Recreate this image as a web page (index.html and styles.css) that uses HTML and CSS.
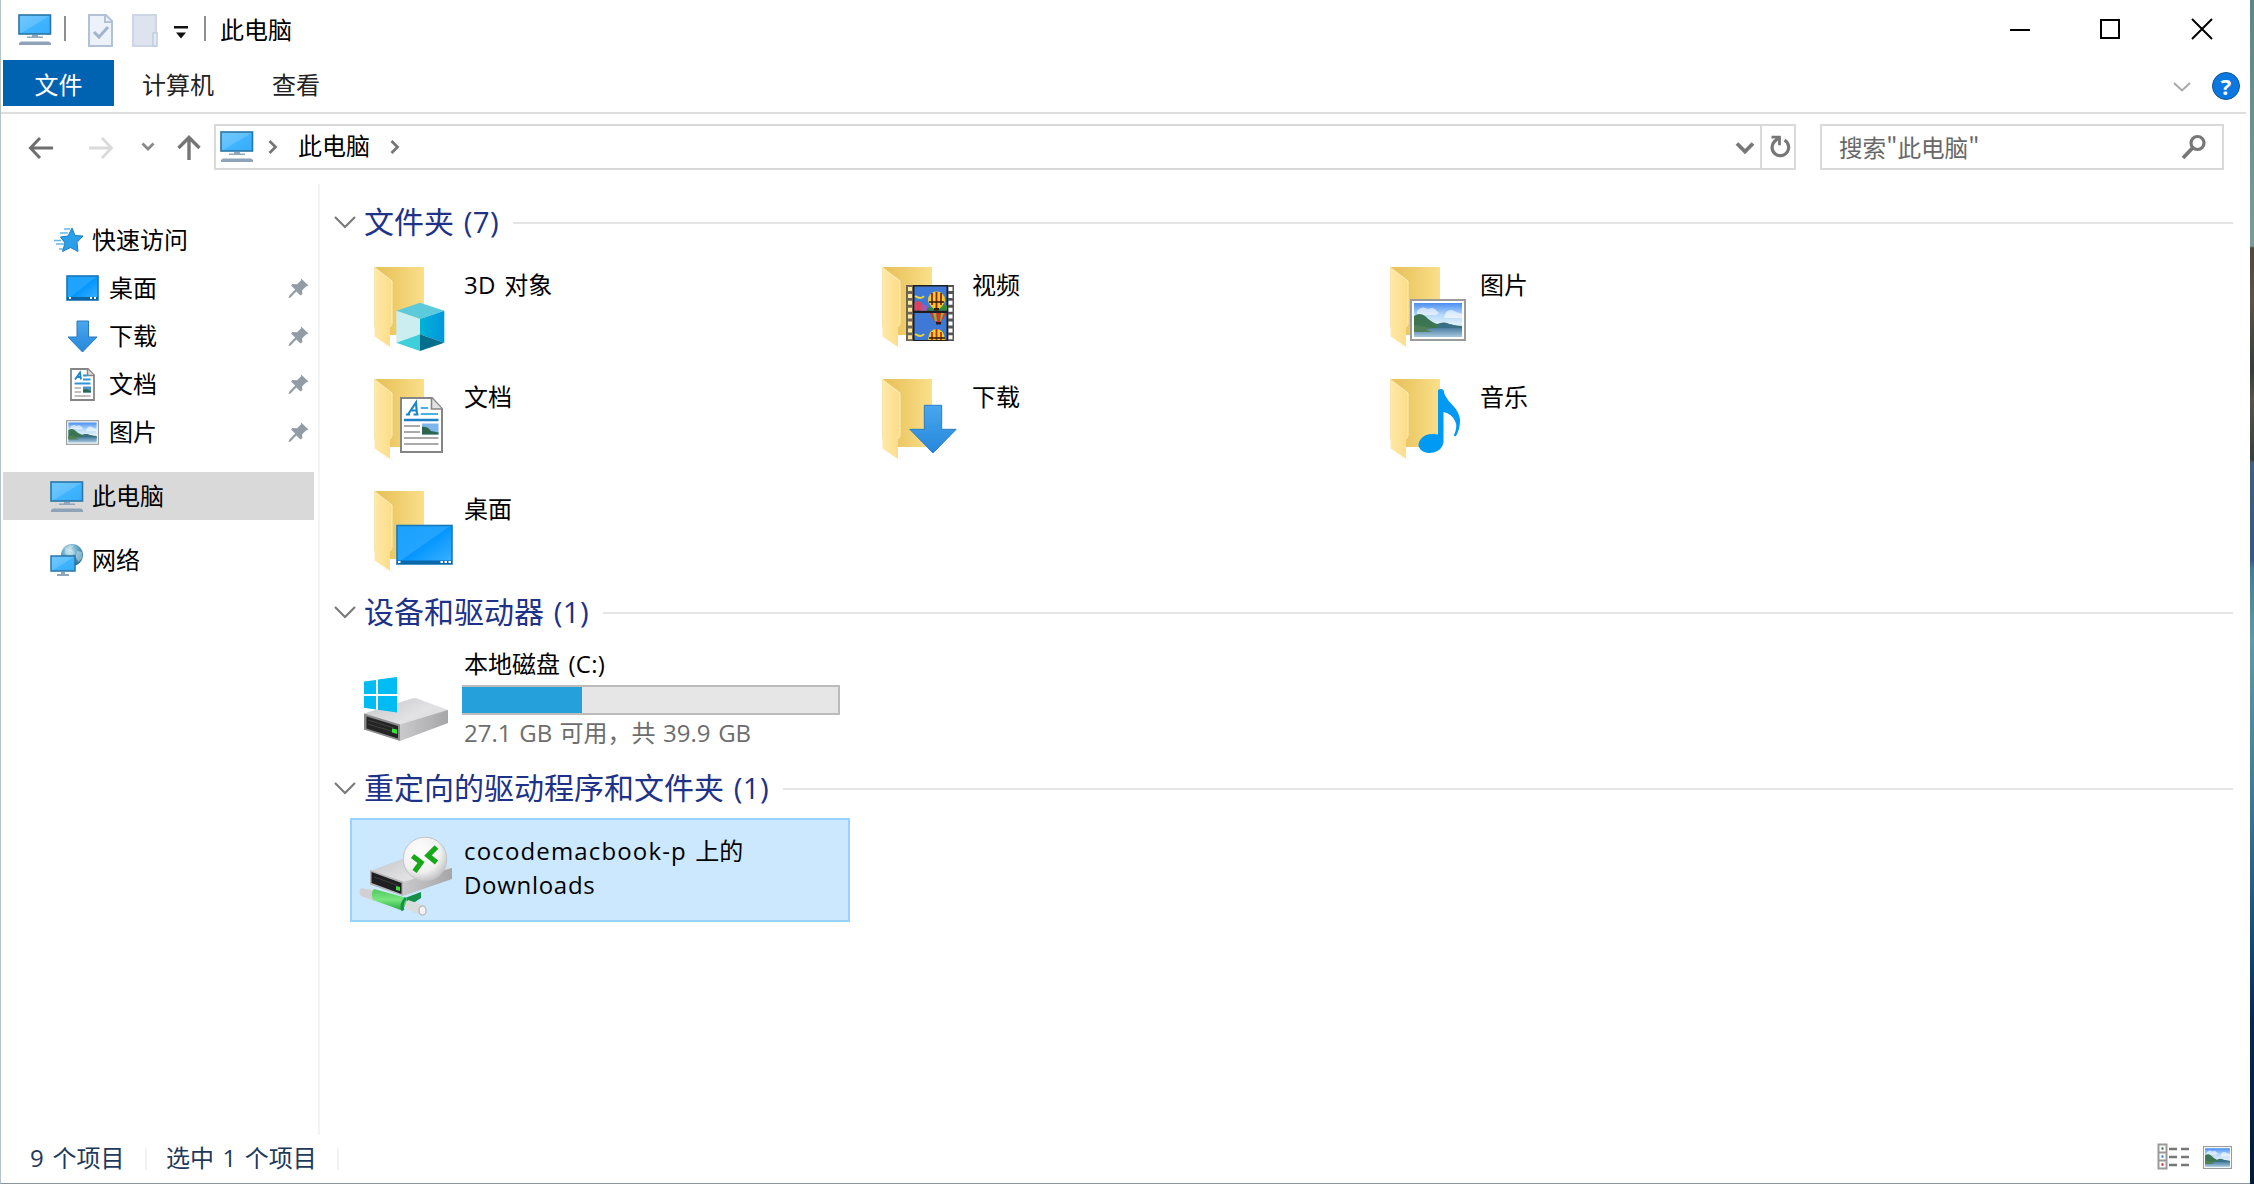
FILE: index.html
```
<!DOCTYPE html>
<html lang="zh-CN">
<head>
<meta charset="utf-8">
<title>此电脑</title>
<link rel="stylesheet" href="styles.css">
</head>
<body>
<svg class="defs" aria-hidden="true">
  <defs>
    <linearGradient id="g-screen" x1="0" y1="0" x2="1" y2="1"><stop offset="0" stop-color="#6fc8ff"/><stop offset=".5" stop-color="#5ec0ff"/><stop offset=".52" stop-color="#40b4ff"/><stop offset="1" stop-color="#36adfb"/></linearGradient>
    <linearGradient id="g-desk" x1="0" y1="0" x2="1" y2="1"><stop offset="0" stop-color="#1aa2ff"/><stop offset=".48" stop-color="#22a4ff"/><stop offset=".5" stop-color="#0496ff"/><stop offset="1" stop-color="#3eb2ff"/></linearGradient>
    <linearGradient id="g-back" x1="0" y1="0" x2="1" y2="0"><stop offset="0" stop-color="#e6c05c"/><stop offset=".4" stop-color="#edcb69"/><stop offset="1" stop-color="#fbdf8a"/></linearGradient>
    <linearGradient id="g-front" x1="0" y1="0" x2="1" y2="0"><stop offset="0" stop-color="#ffe9a8"/><stop offset="1" stop-color="#fcdc88"/></linearGradient>
    <linearGradient id="g-sky" x1="0" y1="0" x2="0" y2="1"><stop offset="0" stop-color="#4b8ff0"/><stop offset=".35" stop-color="#b5d9fb"/><stop offset=".6" stop-color="#dceefb"/></linearGradient>
    <linearGradient id="g-lake" x1="0" y1="0" x2="0" y2="1"><stop offset="0" stop-color="#4c7ea3"/><stop offset="1" stop-color="#a6c8de"/></linearGradient>
    <linearGradient id="g-arrow" x1="0" y1="0" x2="0" y2="1"><stop offset="0" stop-color="#4aa6ee"/><stop offset="1" stop-color="#2588dc"/></linearGradient>
    <linearGradient id="g-top" x1="0" y1="0" x2="1" y2="1"><stop offset="0" stop-color="#c4c5c8"/><stop offset=".5" stop-color="#e2e2e5"/><stop offset="1" stop-color="#cfcfd2"/></linearGradient>
    <linearGradient id="g-side" x1="0" y1="0" x2="1" y2="0"><stop offset="0" stop-color="#cacacd"/><stop offset="1" stop-color="#a6a6a9"/></linearGradient>
    <linearGradient id="g-cubeR" x1="0" y1="0" x2="1" y2="0"><stop offset="0" stop-color="#00b3d4"/><stop offset="1" stop-color="#0096e0"/></linearGradient>
    <linearGradient id="g-pipe" x1="0" y1="0" x2="0" y2="1"><stop offset="0" stop-color="#4fc85c"/><stop offset=".5" stop-color="#79e680"/><stop offset="1" stop-color="#25a838"/></linearGradient>
    <radialGradient id="g-ball" cx=".4" cy=".35" r=".65"><stop offset="0" stop-color="#ffffff"/><stop offset=".7" stop-color="#f0f0f0"/><stop offset="1" stop-color="#c8c8ca"/></radialGradient>
    <radialGradient id="g-globe" cx=".4" cy=".3" r=".7"><stop offset="0" stop-color="#c5e6f2"/><stop offset=".5" stop-color="#6aa9c4"/><stop offset="1" stop-color="#2f6f91"/></radialGradient>

    <symbol id="pc" viewBox="0 0 34 32">
      <rect x="1" y="1" width="31.500" height="19" fill="url(#g-screen)" stroke="#2a76a6" stroke-width="1.600"/>
      <path d="M14 21h6v1.500h5v1.500H9v-1.500h5z" fill="#8fa6bb"/>
      <path d="M3 27.500h28l2 1.500v2H1v-2z" fill="#8fa3b8"/>
    </symbol>
    <symbol id="photo" viewBox="0 0 56 42">
      <rect x="1" y="1" width="54" height="40" fill="#fff" stroke="#9b9b9b" stroke-width="2"/>
      <rect x="4" y="4" width="48" height="34" fill="url(#g-sky)"/>
      <path d="M7 12q5-6 11-2 5-3 9 2 4 3-2 4H7zM36 13q5-4 10 0l6 2v4H34z" fill="#fff" opacity=".6"/>
      <path d="M4 17q6-4 11 0 6 6 12 8 7-3 12 0 7 2 13 2v4H4z" fill="#3c7551"/>
      <path d="M28 26q6-4 11-1l13 3v2H28z" fill="#3a6f88"/>
      <path d="M4 29h48v9H4z" fill="url(#g-lake)"/>
      <path d="M4 26l18 3-6 2 7 2H4z" fill="#4f8056"/>
    </symbol>
    <symbol id="folder" viewBox="0 0 80 88">
      <path d="M16 76h12l-12 7z" fill="#777" opacity=".18"/>
      <path d="M.5 2H50v68H16L.5 62z" fill="url(#g-back)"/>
      <path d="M16 70h34v2l-34 10z" fill="#fff"/>
      <path d="M.5 2.500L18 16v43l-2 3v20L.5 71.500z" fill="url(#g-front)"/>
      <path d="M.5 2.500L18 16v43l-2 3" fill="none" stroke="#fff0bf" stroke-width="1"/>
    </symbol>
    <symbol id="pin" viewBox="0 0 22 22">
      <path d="M13 1.500l7.500 7-2.500 1-4 4 .5 3.500-2 1.500-4.200-4L2.500 20.500.5 21l.7-2.200 6-6.300-4.200-4L4.500 7l4.500.3 4-3.800z" fill="#919ca5"/>
    </symbol>
    <symbol id="chev" viewBox="0 0 22 14"><path d="M1 2l10 10L21 2" fill="none" stroke="#7a7a7a" stroke-width="2.200"/></symbol>
    <symbol id="crumb" viewBox="0 0 10 16"><path d="M1.500 2l6 6-6 6" fill="none" stroke="#777" stroke-width="2.800"/></symbol>
  </defs>
</svg>

<div class="screen">
<main class="window">
  <header class="titlebar">
    <svg class="t-pc" width="34" height="32"><use href="#pc"/></svg>
    <i class="sep s1"></i>
    <svg class="t-doc" width="25" height="33" viewBox="0 0 25 33"><path d="M1 1h17l6 6v25H1z" fill="#edf2fa" stroke="#b3c1d7" stroke-width="2"/><path d="M17 1v7h7" fill="none" stroke="#b3c1d7" stroke-width="2"/><path d="M6 18l5 5 9-10" fill="none" stroke="#a3b4cc" stroke-width="3"/></svg>
    <svg class="t-fold" width="27" height="33" viewBox="0 0 27 33"><path d="M1 1h23v31H1z" fill="#dde4ee" stroke="#ccd6e5" stroke-width="2"/><path d="M21 19h4v13h-4z" fill="#e6ebf3" stroke="#c0cde0" stroke-width="1.500"/></svg>
    <svg class="t-drop" width="14" height="13" viewBox="0 0 14 13"><path d="M0 0h14v2.500H0zM2 6.500h10l-5 6z" fill="#111"/></svg>
    <i class="sep s2"></i>
    <h1 class="title">此电脑</h1>
    <div class="controls">
      <svg width="22" height="22" viewBox="0 0 22 22"><path d="M1 12h20" stroke="#000" stroke-width="2"/></svg>
      <svg width="22" height="22" viewBox="0 0 22 22"><path d="M2 2h18v18H2z" fill="none" stroke="#000" stroke-width="2"/></svg>
      <svg width="22" height="22" viewBox="0 0 22 22"><path d="M1 1l20 20M21 1L1 21" stroke="#000" stroke-width="2"/></svg>
    </div>
  </header>

  <nav class="tabs">
    <span class="tab file">文件</span><span class="tab t2">计算机</span><span class="tab t3">查看</span>
    <svg class="ribbon-chev" width="18" height="12" viewBox="0 0 18 12"><path d="M1 2l8 7.500L17 2" fill="none" stroke="#a9a9a9" stroke-width="2"/></svg>
    <span class="help">?</span>
  </nav>

  <div class="address-row">
    <svg class="a-back" width="26" height="24" viewBox="0 0 26 24"><path d="M25 12H3M12 2L2.500 12l9.500 10" fill="none" stroke="#6f6f6f" stroke-width="3"/></svg>
    <svg class="a-fwd" width="26" height="24" viewBox="0 0 26 24"><path d="M1 12h22M14 2l9.500 10L14 22" fill="none" stroke="#dadada" stroke-width="2.800"/></svg>
    <svg class="a-hist" width="14" height="10" viewBox="0 0 14 10"><path d="M1.500 1.500L7 7l5.500-5.500" fill="none" stroke="#888" stroke-width="2.800"/></svg>
    <svg class="a-up" width="24" height="26" viewBox="0 0 24 26"><path d="M12 25V3M1.500 13L12 2.500 22.500 13" fill="none" stroke="#757575" stroke-width="3.400"/></svg>
    <div class="path">
      <svg class="p-pc" width="34" height="32"><use href="#pc"/></svg>
      <svg class="p-c1" width="10" height="16"><use href="#crumb"/></svg>
      <span class="p-text">此电脑</span>
      <svg class="p-c2" width="10" height="16"><use href="#crumb"/></svg>
      <svg class="p-drop" width="20" height="14" viewBox="0 0 20 14"><path d="M2 2.500l8 8 8-8" fill="none" stroke="#777" stroke-width="3.800"/></svg>
      <span class="refresh"><svg width="22" height="24" viewBox="0 0 22 24"><path d="M15.500 5.200A8.300 8.300 0 1 1 5.500 6.500L9.500 3" fill="none" stroke="#777" stroke-width="3.200"/><path d="M2.500 2.200h8v8" fill="none" stroke="#777" stroke-width="2.800"/></svg></span>
    </div>
    <div class="search"><span>搜索"此电脑"</span>
      <svg width="26" height="26" viewBox="0 0 26 26"><circle cx="16.500" cy="9" r="6.500" fill="none" stroke="#777" stroke-width="3.200"/><path d="M12 13.500L2 24" stroke="#777" stroke-width="3.800"/></svg>
    </div>
  </div>

  <div class="body">
    <aside class="sidebar">
      <div class="row"><svg class="star" width="30" height="26" viewBox="0 0 30 26"><path d="M18 1l3 7.500 8 .5-6 6.300 1 9.200-7.500-4-8 4 2.500-8.500-4.500-6 7.500-1z" fill="#2b9fe8" stroke="#1c7fc4" stroke-width="1"/><path d="M10 2h6M6 6h8M2 17h8M0 13.500h7M5 22h4" stroke="#63b6ea" stroke-width="1.600"/></svg><span>快速访问</span></div>
      <div class="row sub"><svg width="33" height="26" viewBox="0 0 33 26"><rect x="1" y="1" width="31" height="24" fill="url(#g-desk)" stroke="#1676b8" stroke-width="1.600"/><path d="M1 22h31v3H1z" fill="#0c64a4"/><path d="M3 23h2M24 23h2M28 23h2" stroke="#fff" stroke-width="2"/></svg><span>桌面</span><svg class="pin" width="22" height="22"><use href="#pin"/></svg></div>
      <div class="row sub"><svg width="33" height="33" viewBox="0 0 33 33"><path d="M11 1h11.500v16H31L16.500 32 2 17h9z" fill="url(#g-arrow)" stroke="#2a78bd"/></svg><span>下载</span><svg class="pin" width="22" height="22"><use href="#pin"/></svg></div>
      <div class="row sub"><svg width="33" height="33" viewBox="0 0 33 33"><path d="M5 1h17l6 6v25H5z" fill="#fff" stroke="#858585" stroke-width="1.800"/><path d="M21.500 1v6.500H28" fill="#ddd" stroke="#858585" stroke-width="1.400"/><path d="M9 11.500l5-7 1 7M11 9h4" fill="none" stroke="#1c86cc" stroke-width="1.800"/><path d="M17 7.500h4M17 11.500h7.500M8.500 15.500h16" stroke="#2f93d8" stroke-width="2"/><path d="M8.500 20h6.500M8.500 24h6.500M8.500 28h16" stroke="#aaa" stroke-width="1.600"/><path d="M17 18.500h8v6h-8z" fill="#4a93cf"/><path d="M17 22l3-1 5 2v1.500h-8z" fill="#2d6650"/></svg><span>文档</span><svg class="pin" width="22" height="22"><use href="#pin"/></svg></div>
      <div class="row sub"><svg width="33" height="25"><use href="#photo"/></svg><span>图片</span><svg class="pin" width="22" height="22"><use href="#pin"/></svg></div>
      <div class="row selected"><svg width="34" height="32"><use href="#pc"/></svg><span>此电脑</span></div>
      <div class="row"><svg width="34" height="34" viewBox="0 0 34 34"><circle cx="22" cy="12" r="11" fill="url(#g-globe)"/><path d="M15 5q5-4 9-3l-3 4 4 4-4 3-6-2zM27 8l5 1 .5 6-4 4-3-5z" fill="#d5edf5" opacity=".45"/><rect x="1" y="13" width="24" height="15" fill="url(#g-screen)" stroke="#2a76a6" stroke-width="1.500"/><path d="M11 29h4v2h4v2H7v-2h4z" fill="#8fa6bb"/></svg><span>网络</span></div>
    </aside>

    <section class="content">
      <h2 class="group g1"><svg width="22" height="14"><use href="#chev"/></svg><span>文件夹 <b>(7)</b></span><i></i></h2>
      <div class="tiles">
        <div class="tile"><svg width="80" height="88" viewBox="0 0 80 88"><use href="#folder" width="80" height="88"/><path d="M46 37.700l24.300 8L46 54l-23.700-8.300z" fill="#5bcbdc"/><path d="M22.300 45.700L46 54v15.300l-23.700 8.400z" fill="#cdeef0"/><path d="M46 54l24.300-8.300v32L46 69.300z" fill="url(#g-cubeR)"/><path d="M22.300 77.700L46 69.300V86z" fill="#3fcfdb"/><path d="M46 69.300l24.300 8.400L46 86z" fill="#046f8c"/></svg><span><b>3D</b> 对象</span></div>
        <div class="tile"><svg width="80" height="88" viewBox="0 0 80 88"><use href="#folder" width="80" height="88"/><path d="M24 20h48v56H24z" fill="#555"/><path d="M24 20h8v56h-8z" fill="#6d6552"/><path d="M28 22v54" stroke="#ffe7a0" stroke-width="4" stroke-dasharray="4 2.900"/><path d="M68.500 22v54" stroke="#fff" stroke-width="4" stroke-dasharray="4 2.900"/><path d="M31 20h35v56H31z" fill="#1d1d1d"/><path d="M32.500 21.500h32v24h-32zM32.500 48h32v27h-32z" fill="#3f79d6"/><path d="M32.500 38q4-4 7 0l5 7.500h-12z" fill="#dc4358"/><path d="M40 39l5 2v4.500h-6z" fill="#a15ab2"/><path d="M45 43l20-3v5.500H45z" fill="#358b3a"/><path d="M33 31q6 4 9 0M33 69q6 4 9 0" fill="none" stroke="#e8d73c" stroke-width="2"/><path d="M46 35a8.500 8.500 0 0 1 17 0q0 4-6 9h-5q-6-5-6-9z" fill="#f5ce25"/><path d="M50 28v12M54.500 27v16M59 28v12" stroke="#8f2418" stroke-width="1.800"/><path d="M47 37h15" stroke="#342015" stroke-width="1.600"/><path d="M52 43h5v2.500h-5z" fill="#301b12"/><path d="M48 48h16q-2 6-6 9h-4q-4-3-6-9z" fill="#d9323a"/><path d="M51 48h3l1 8h-2zM59 48h3l-3 8h-1z" fill="#7cbf2f"/><path d="M54 57h5v2.500h-5z" fill="#301b12"/><path d="M46 75q1-11 8.500-11T63 75z" fill="#f5ce25"/><path d="M50 67v8M54.500 64v11M59 67v8" stroke="#b93420" stroke-width="1.800"/><path d="M47 73h16" stroke="#342015" stroke-width="1.600"/></svg><span>视频</span></div>
        <div class="tile"><svg width="80" height="88" viewBox="0 0 80 88"><use href="#folder" width="80" height="88"/><use href="#photo" x="20" y="34" width="56" height="42"/></svg><span>图片</span></div>
        <div class="tile"><svg width="80" height="88" viewBox="0 0 80 88"><use href="#folder" width="80" height="88"/><path d="M27 21h31l10 11v43H27z" fill="#fff" stroke="#858585" stroke-width="2"/><path d="M57.500 21v11H68" fill="#e3e3e3" stroke="#858585" stroke-width="1.600"/><path d="M32 37.500h4M34 37.500l8-12 1 12M39.500 37.500h5M36.500 33.500h6" fill="none" stroke="#1c86cc" stroke-width="2.200"/><path d="M46.700 31h7.500M46.700 37H64" stroke="#4ab0e4" stroke-width="2"/><path d="M30 43h34.500" stroke="#1d82c6" stroke-width="2.600"/><path d="M30 49h16M30 55h16M30 61h34.500M30 67h34.500" stroke="#aaa" stroke-width="2"/><path d="M48 46.500h16.500v11H48z" fill="#7db6ea"/><path d="M48 50q5-1 9 4l7.500 1.500v2H48z" fill="#2d6650"/></svg><span>文档</span></div>
        <div class="tile"><svg width="80" height="88" viewBox="0 0 80 88"><use href="#folder" width="80" height="88"/><path d="M42.300 28.300h17.400v24h14.500L51 76 27.800 52.300h14.500z" fill="url(#g-arrow)" stroke="#2a7cc4"/></svg><span>下载</span></div>
        <div class="tile"><svg width="80" height="88" viewBox="0 0 80 88"><use href="#folder" width="80" height="88"/><path d="M48 13q3-2 5.500 0 1 7 8 14 9 9 8.500 18-.5 8-4 14-2 1-2-1 4-9 1-14-3-7-11.500-9v30q-1 8-10 10.500-9 1.500-13-3-4-5 0-10 5-7 17.500-5z" fill="#0099f4"/></svg><span>音乐</span></div>
        <div class="tile"><svg width="80" height="88" viewBox="0 0 80 88"><use href="#folder" width="80" height="88"/><rect x="23" y="36.500" width="55" height="38.500" fill="url(#g-desk)" stroke="#1878b8" stroke-width="1.600"/><path d="M23 71.500h55v3.500H23z" fill="#0b69ab"/><path d="M24 73h2.500M66.500 73H69M70.500 73H73M74.500 73H77" stroke="#fff" stroke-width="2.200"/></svg><span>桌面</span></div>
      </div>

      <h2 class="group g2"><svg width="22" height="14"><use href="#chev"/></svg><span>设备和驱动器 <b>(1)</b></span><i></i></h2>
      <div class="drive">
        <svg width="86" height="66" viewBox="0 0 86 66"><path d="M0 36.500L48 21.500q3-1 5 0L84 33v13L36 63.500 0 52.500z" fill="url(#g-top)"/><path d="M36 47.500L84 33v13L36 64z" fill="url(#g-side)"/><path d="M0 36.500l36 11V64L0 52.500z" fill="#8a8a8d"/><path d="M2.500 39.500L34 49v12.500L2.500 51.500z" fill="#242424"/><path d="M4 43l26 8M4 47l26 8" stroke="#414141"/><path d="M28 51.500l5 1v4.500l-5-1.500z" fill="#38e238"/><path d="M0 4.600L12 3v14H0zM14 2.600L33 0v17H14zM0 19h12v13.500L0 30.800zM14 19h19v16.500l-19-2.700z" fill="#00bcf2"/></svg>
        <div class="drive-info">
          <div class="name">本地磁盘 <b>(C:)</b></div>
          <div class="meter"><div class="fill" style="width:31.9%"></div></div>
          <div class="space"><b>27.1 GB</b> 可用，共 <b>39.9 GB</b></div>
        </div>
      </div>

      <h2 class="group g3"><svg width="22" height="14"><use href="#chev"/></svg><span>重定向的驱动程序和文件夹 <b>(1)</b></span><i></i></h2>
      <div class="remote">
        <svg width="100" height="84" viewBox="0 0 100 84"><path d="M9 52q-3 5 0 8l14 5 3-10z" fill="#d1d1d3"/><path d="M18 35l35-13 47 10v10L51 58 18 47z" fill="url(#g-top)"/><path d="M51 46l49-14v11L51 60z" fill="url(#g-side)"/><path d="M18 34l33 11.500V60L18 48.500z" fill="#b5b5b8"/><path d="M19.500 36L49.500 47v11L19.500 47z" fill="#1f1f22"/><path d="M22 41l24 8.500" stroke="#3c3c3c"/><path d="M44 50l4 1v4l-4-1z" fill="#35e235"/><path d="M53 62l16-6v6l-12 8z" fill="#168f4b"/><path d="M22 53q-4 5-1 11l29 10.500q5-6 5-12.500z" fill="url(#g-pipe)"/><path d="M54 62q-6 6-3 12.500" fill="none" stroke="#168f4b" stroke-width="3"/><path d="M56 64q-4 5-2 9l14 6q6-1 6-9z" fill="#d9dcdc"/><ellipse cx="70.500" cy="74.500" rx="3.500" ry="4.500" fill="#f2f2f2" stroke="#aaa"/><circle cx="73" cy="23" r="21.800" fill="url(#g-ball)" stroke="#c4c4c6"/><path d="M60.500 20l8.500 6.500-6.500 9M84.500 11l-8.500 8.500 8.500 7" fill="none" stroke="#17a81a" stroke-width="5.200"/></svg>
        <p><b class="host">cocodemacbook-p</b> 上的<br><b class="share">Downloads</b></p>
      </div>
    </section>
  </div>

  <footer class="status">
    <span class="st1"><b>9</b> 个项目</span><i></i>
    <span class="st2">选中 <b>1</b> 个项目</span><i></i>
    <div class="views">
      <svg width="34" height="28" viewBox="0 0 34 28"><path d="M1.500 1.500h8v24h-8zM1.500 9.500h8M1.500 17.500h8" fill="#fff" stroke="#9a9a9a" stroke-width="2"/><path d="M12 6h8M24 6h8M12 14h8M24 14h8M12 22h8M24 22h8" stroke="#777" stroke-width="2.400"/><path d="M4.500 5.500h2" stroke="#2f7d52" stroke-width="2.400"/><path d="M4.500 13.500h2" stroke="#2b7ff0" stroke-width="2.400"/><path d="M4.500 21.500h2" stroke="#e01b1b" stroke-width="2.400"/></svg>
      <svg width="29" height="23" viewBox="0 0 56 42" preserveAspectRatio="none"><use href="#photo"/></svg>
    </div>
  </footer>
</main>
<div class="wallpaper"></div>
</div>
</body>
</html>
```

FILE: styles.css
```
* { box-sizing: border-box; }
html, body { margin: 0; height: 100%; }
body {
  font-family: "Noto Sans CJK SC", "Open Sans", sans-serif;
  font-size: 24px;
  line-height: 36px;
  word-spacing: 3px;
  color: #000;
  overflow: hidden;
}
b { font-family: "Open Sans", "Noto Sans", sans-serif; font-weight: 400; font-size: 24px; letter-spacing: .3px; line-height: 1; }
svg { display: block; flex: none; }
i { display: block; flex: none; }
span { white-space: nowrap; }
.defs { position: absolute; width: 0; height: 0; }
.screen { display: flex; height: 1184px; width: 2254px; }
.window {
  display: flex; flex-direction: column; width: 2250px; background: #fff;
  border-left: 1px solid #b3c3c6; border-bottom: 1px solid #8d949c;
}
.wallpaper {
  width: 4px;
  background: linear-gradient(#5d8583 0, #789d99 246px, #51473e 248px, #5b5446 300px, #343c3c 370px, #56544a 400px, #343f3e 460px, #416078 462px, #35597d 560px, #477a8e 568px, #6198a5 640px, #457d94 780px, #1e5275 920px, #06294a 1020px, #021b36 1184px);
}

.titlebar { display: flex; align-items: flex-start; height: 60px; padding: 14px 37px 0 17px; }
.sep { width: 2px; height: 25px; background: #8f8f8f; }
.s1 { margin: 2px 22px 0 12px; }
.t-fold { margin-left: 19px; }
.t-drop { margin: 12px 0 0 15px; }
.s2 { margin: 2px 0 0 16px; }
.title { margin: -3px 0 0 14px; font-size: 24px; font-weight: 400; line-height: 36px; }
.controls { display: flex; gap: 68px; margin: 4px 0 0 auto; }
.controls svg:last-child { margin-left: 2px; }

.tabs { display: flex; height: 54px; padding-left: 2px; margin-right: 4px; border-bottom: 2px solid #dedede; align-items: flex-start; }
.tab { color: #222; line-height: 48px; }
.file { width: 111px; height: 46px; background: #0063b1; color: #fff; text-align: center; line-height: 47px; }
.t2 { margin-left: 28px; }
.t3 { margin-left: 58px; }
.ribbon-chev { margin: 21px 21px 0 auto; }
.help {
  width: 28px; height: 28px; border-radius: 50%; margin: 12px 6px 0 0; background: #0a78e0; border: 1px solid #14538f;
  color: #fff; font: 700 22px/27px "Open Sans", sans-serif; text-align: center;
}

.address-row { display: flex; height: 70px; padding: 10px 26px 0 27px; align-items: flex-start; }
.a-back { margin-top: 12px; }
.a-fwd { margin: 12px 0 0 34px; }
.a-hist { margin: 18px 0 0 27px; }
.a-up { margin: 11px 0 0 22px; }
.path { display: flex; align-items: center; width: 1582px; height: 46px; margin-left: 13px; border: 2px solid #d9d9d9; }
.p-pc { margin-left: 4px; }
.p-c1 { margin-left: 14px; }
.p-text { margin: -4px 0 0 20px; }
.p-c2 { margin-left: 20px; }
.p-drop { margin: 2px 5px 0 auto; }
.refresh { display: flex; width: 34px; height: 42px; border-left: 2px solid #d9d9d9; align-items: center; padding-left: 7px; }
.search { display: flex; width: 404px; height: 46px; margin-left: auto; border: 2px solid #d9d9d9; align-items: center; justify-content: space-between; padding: 0 15px 0 17px; color: #686868; }
.search span { font-size: 23.600px; margin-top: -1px; }

.body { display: flex; height: 951px; }
.sidebar { width: 319px; border-right: 2px solid #f4f4f4; padding: 32px 0 0 2px; }
.row { display: flex; align-items: center; height: 48px; width: 311px; padding-left: 47px; }
.row span { margin: -3px 0 0 8px; }
.star { margin-left: 4px; }
.sub { padding-left: 63px; padding-right: 4px; }
.sub span { margin-left: 10px; }
.pin { margin-left: auto; }
.selected { margin: 16px 0; background: #d9d9d9; }
.selected svg { margin-top: 2px; }

.content { flex: 1; padding: 16px 17px 0 14px; }
.group { display: flex; align-items: center; margin: 0; height: 44px; font-size: 30px; font-weight: 400; line-height: 44px; color: #1e3287; }
.group span { margin-left: 8px; margin-top: -4px; }
.group b { font-size: 29.500px; }
.group i { flex: 1; height: 2px; background: #e5e5e5; margin: 2px 0 0 14px; }
.tiles { display: grid; grid-template-columns: repeat(3, 508px); grid-auto-rows: 112px; padding: 21px 0 0 40px; }
.tile { display: flex; gap: 10px; }
.tile span { padding-top: 1px; }
.g2 { margin-top: -11px; }
.drive { display: flex; padding: 12px 0 0 30px; }
.drive svg { margin-top: 31px; }
.drive-info { margin-left: 12px; width: 378px; }
.name { line-height: 34px; height: 36px; padding-left: 2px; }
.meter { height: 30px; margin-top: 3px; background: #e6e6e6; border: 2px solid #bcbcbc; border-left: 0; }
.fill { height: 26px; background: #26a0da; }
.space { color: #6d6d6d; padding-left: 2px; line-height: 34px; height: 36px; white-space: nowrap; word-spacing: 2px; }
.space b { letter-spacing: 0; word-spacing: 1.500px; }
.g3 { margin-top: 15px; }
.remote { display: flex; width: 500px; height: 104px; margin: 8px 0 0 16px; background: #cce8ff; border: 2px solid #99d1ff; }
.remote svg { margin: 16px 0 0 0; }
.remote p { margin: 13px 0 0 12px; line-height: 34px; white-space: nowrap; }
.host { letter-spacing: 1.150px; }
.share { letter-spacing: .700px; }

.status { display: flex; height: 48px; align-items: flex-start; padding: 4px 18px 0 29px; color: #1e395b; }
.status i { width: 2px; height: 22px; background: #f2f2f2; margin-top: 9px; }
.st1 { width: 115px; }
.st2 { margin-left: 19px; width: 171px; }
.views { display: flex; gap: 12px; margin: 4px 0 0 auto; align-items: center; }
```
